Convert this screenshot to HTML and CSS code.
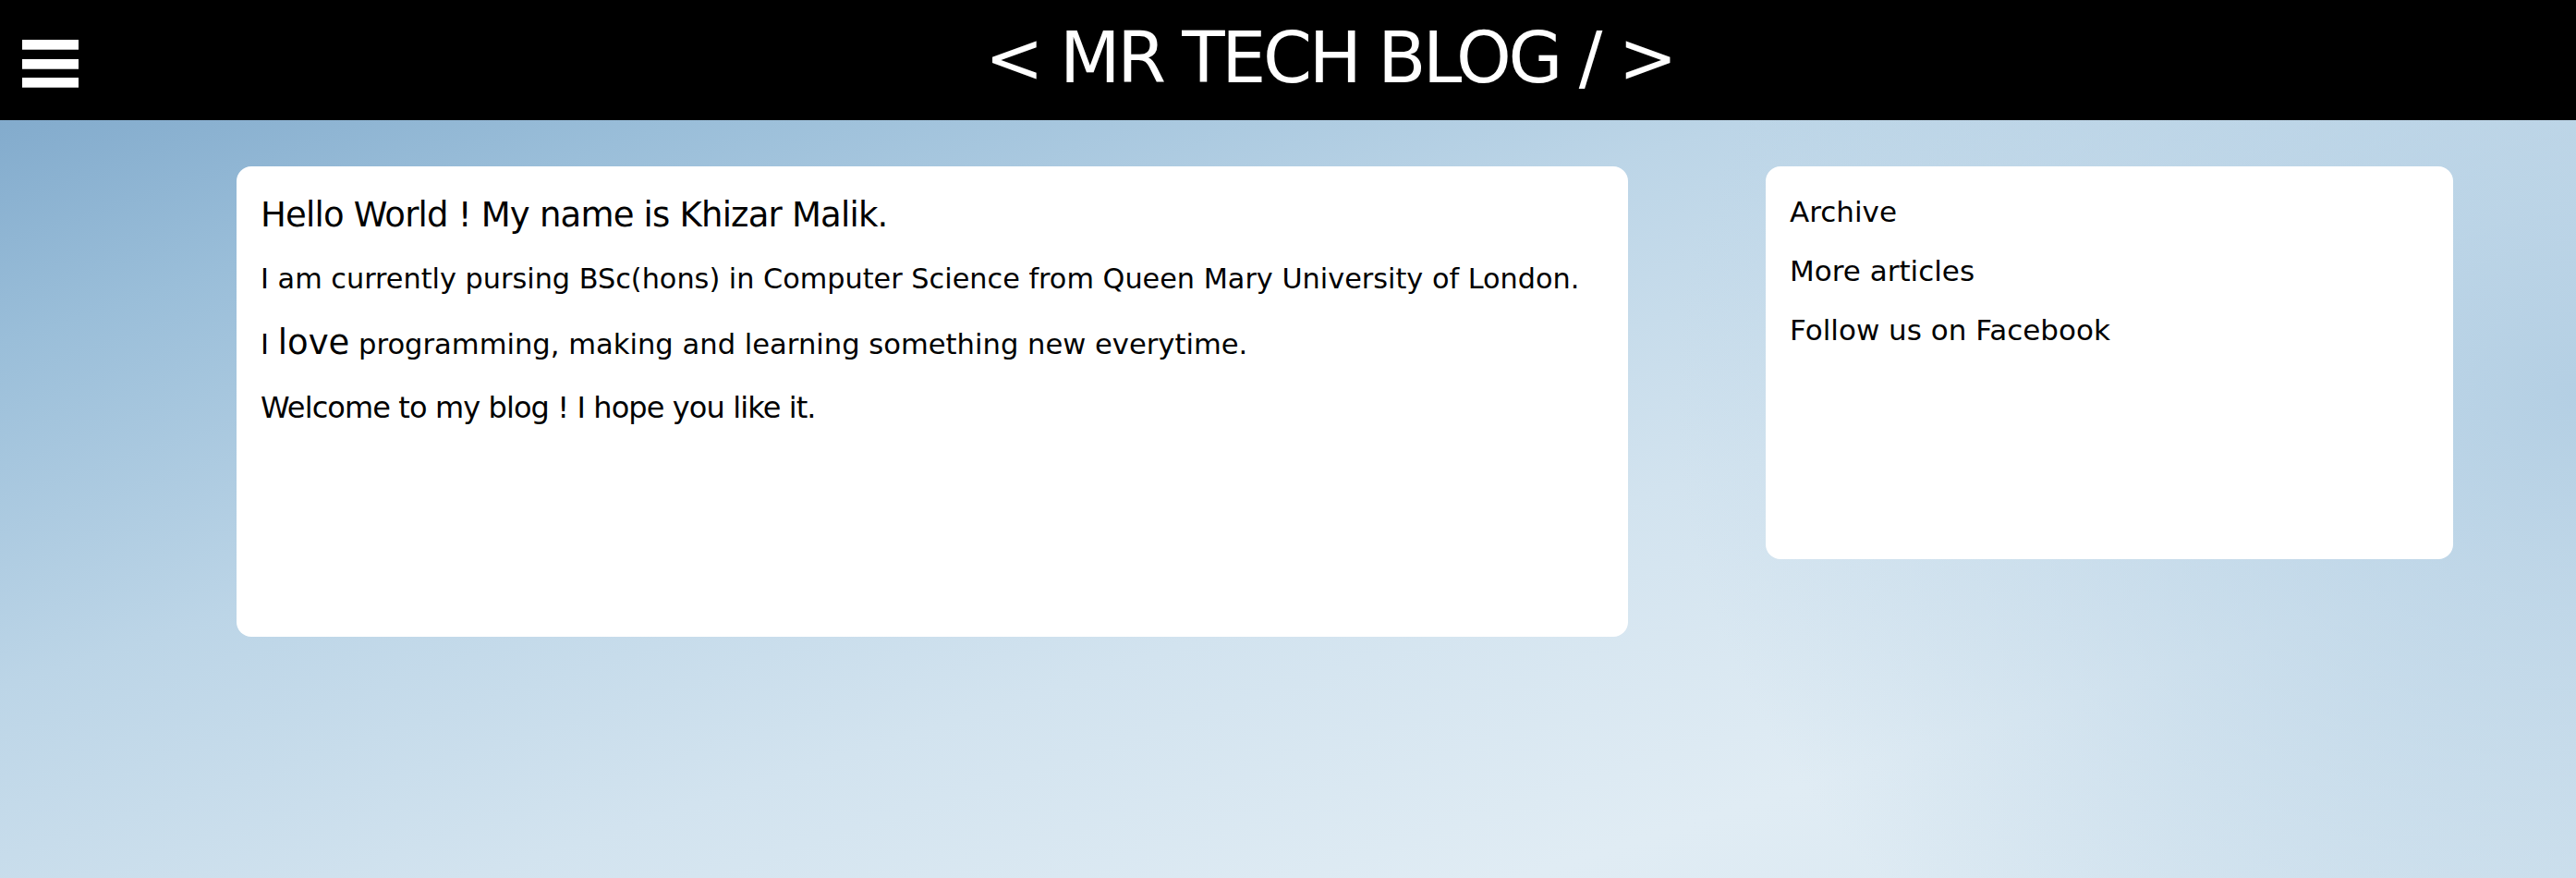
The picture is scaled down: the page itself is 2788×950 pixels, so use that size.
FILE: index.html
```html
<!DOCTYPE html>
<html lang="en">
<head>
<meta charset="utf-8">
<title>MR TECH BLOG</title>
<link rel="stylesheet" href="styles.css">
</head>
<body>
<header class="topbar">
  <div class="menu-btn" aria-label="Menu">
    <span class="bar"></span>
    <span class="bar"></span>
    <span class="bar"></span>
  </div>
  <h1 class="site-title">&lt; MR TECH BLOG / &gt;</h1>
</header>
<main class="content">
  <section class="card intro">
    <p class="hello">Hello World ! My name is Khizar Malik.</p>
    <p class="line study">I am currently pursing BSc(hons) in Computer Science from Queen Mary University of London.</p>
    <p class="line love-line">I <span class="love">love</span> programming, making and learning something new everytime.</p>
    <p class="line welcome">Welcome to my blog ! I hope you like it.</p>
  </section>
  <aside class="card sidebar">
    <a class="side-link" href="#">Archive</a>
    <a class="side-link" href="#">More articles</a>
    <a class="side-link" href="#">Follow us on Facebook</a>
  </aside>
</main>
</body>
</html>
```

FILE: styles.css
```css
html, body {
  margin: 0;
  padding: 0;
  min-height: 100vh;
}

body {
  font-family: "DejaVu Sans", "Liberation Sans", sans-serif;
  color: #000;
  background:
    radial-gradient(ellipse 1300px 1100px at 100% 45%, rgba(178, 206, 227, 0.95), rgba(178, 206, 227, 0) 75%),
    linear-gradient(162deg, #76a1c6 0%, #9abed9 20%, #bcd5e7 40%, #d2e3ef 60%, #e0ecf4 80%, #d8e7f1 100%);
  background-attachment: fixed;
}

.topbar {
  height: 130px;
  background: #000;
  display: flex;
  align-items: flex-start;
}

.menu-btn {
  width: 61px;
  margin: 43px 5px 0 24px;
  display: flex;
  flex-direction: column;
  gap: 9.5px;
}

.bar {
  display: block;
  height: 11px;
  background: #fff;
  box-shadow: inset 0 -1px 0 #b8b8b8;
}

.site-title {
  flex: 1;
  margin: 0;
  height: 130px;
  padding-bottom: 5px;
  box-sizing: border-box;
  display: flex;
  align-items: center;
  justify-content: center;
  color: #fff;
  font-weight: normal;
  font-size: 76px;
  letter-spacing: -3.4px;
  white-space: nowrap;
}

.content {
  display: grid;
  grid-template-columns: 1506fr 744fr;
  column-gap: 149px;
  align-items: start;
  padding: 50px 133px 0 256px;
}

.card {
  background: #fff;
  border-radius: 16px;
  box-sizing: border-box;
  padding-left: 26px;
}

.intro {
  height: 509px;
  padding-top: 18px;
}

.intro p {
  margin: 0;
  line-height: 69px;
  white-space: nowrap;
}

.hello {
  font-size: 37px;
  letter-spacing: -0.8px;
}

.study {
  font-size: 30.3px;
}

.love-line {
  font-size: 30.6px;
}

.love {
  font-size: 37px;
}

.welcome {
  font-size: 32px;
  letter-spacing: -0.9px;
}

.sidebar {
  height: 425px;
  padding-top: 17px;
  display: flex;
  flex-direction: column;
}

.side-link {
  display: block;
  color: #000;
  text-decoration: none;
  font-size: 31px;
  line-height: 64px;
}
```
